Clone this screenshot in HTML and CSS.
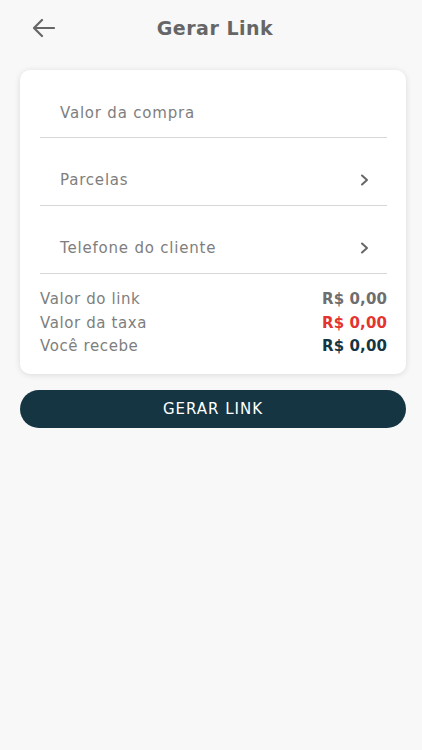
FILE: index.html
```html
<!DOCTYPE html>
<html lang="pt-BR">
<head>
    <meta charset="UTF-8">
    <meta name="viewport" content="width=device-width, initial-scale=1.0">
    <title>Gerar Link</title>
    <link rel="stylesheet" href="styles.css">
</head>
<body>

<div class="topbar">
    <div class="back-btn">
        <svg width="24" height="20" viewBox="0 0 24 20">
            <path d="M11 2 L3 10 L11 18 M3 10 H23" fill="none" stroke="#666" stroke-width="2.2" stroke-linecap="round" stroke-linejoin="round"/>
        </svg>
    </div>
    <h1>Gerar Link</h1>
</div>

<div class="card">
    <div class="field">
        <span>Valor da compra</span>
    </div>
    <div class="field">
        <span>Parcelas</span>
        <svg class="chevron" width="9" height="12" viewBox="0 0 9 12">
            <path d="M2 1.5 L7 6 L2 10.5" fill="none" stroke="#666" stroke-width="2" stroke-linecap="round" stroke-linejoin="round"/>
        </svg>
    </div>
    <div class="field">
        <span>Telefone do cliente</span>
        <svg class="chevron" width="9" height="12" viewBox="0 0 9 12">
            <path d="M2 1.5 L7 6 L2 10.5" fill="none" stroke="#666" stroke-width="2" stroke-linecap="round" stroke-linejoin="round"/>
        </svg>
    </div>

    <div class="summary">
        <div class="summary-row">
            <span>Valor do link</span>
            <strong class="val-grey">R$ 0,00</strong>
        </div>
        <div class="summary-row">
            <span>Valor da taxa</span>
            <strong class="val-red">R$ 0,00</strong>
        </div>
        <div class="summary-row">
            <span>Você recebe</span>
            <strong class="val-dark">R$ 0,00</strong>
        </div>
    </div>
</div>

<button class="main-btn">GERAR LINK</button>

</body>
</html>
```

FILE: styles.css
```css
body {
    margin: 0;
    font-family: "DejaVu Sans", sans-serif;
    background-color: #f8f8f8;
    color: #777;
}
.topbar {
    height: 56px;
    display: flex;
    align-items: center;
    justify-content: center;
    position: relative;
    margin-bottom: 14px;
    padding-left: 8px;
}
.back-btn {
    position: absolute;
    left: 31px;
    top: 18px;
}
.topbar h1 {
    margin: 0;
    font-size: 19px;
    font-weight: bold;
    color: #666;
    letter-spacing: 0.5px;
}
.card {
    margin: 0 16px 0 20px;
    background-color: #fff;
    border-radius: 10px;
    box-shadow: 0 1px 6px rgba(0, 0, 0, 0.12);
    padding: 0 19px 0 20px;
}
.field {
    height: 68px;
    box-sizing: border-box;
    border-bottom: 1px solid #d6d6d6;
    display: flex;
    align-items: flex-end;
    justify-content: space-between;
    padding: 0 18px 16px 20px;
    font-size: 15px;
    line-height: 18px;
    letter-spacing: 0.8px;
    color: #7e7e7e;
}
.field:first-child {
    padding-bottom: 15px;
}
.chevron {
    margin-bottom: 3px;
}
.summary {
    padding: 14px 0 15px;
}
.summary-row {
    display: flex;
    justify-content: space-between;
    font-size: 15px;
    line-height: 23.5px;
    letter-spacing: 0.6px;
    color: #7e7e7e;
}
.summary-row strong {
    letter-spacing: 0.1px;
}
.val-grey {
    color: #6e6e6e;
}
.val-red {
    color: #e3342f;
}
.val-dark {
    color: #163543;
}
.main-btn {
    display: block;
    margin: 16px 16px 0 20px;
    width: 386px;
    height: 38px;
    border: none;
    border-radius: 19px;
    background-color: #163543;
    color: #fff;
    font-family: "DejaVu Sans", sans-serif;
    font-size: 15px;
    letter-spacing: 1px;
}
```
